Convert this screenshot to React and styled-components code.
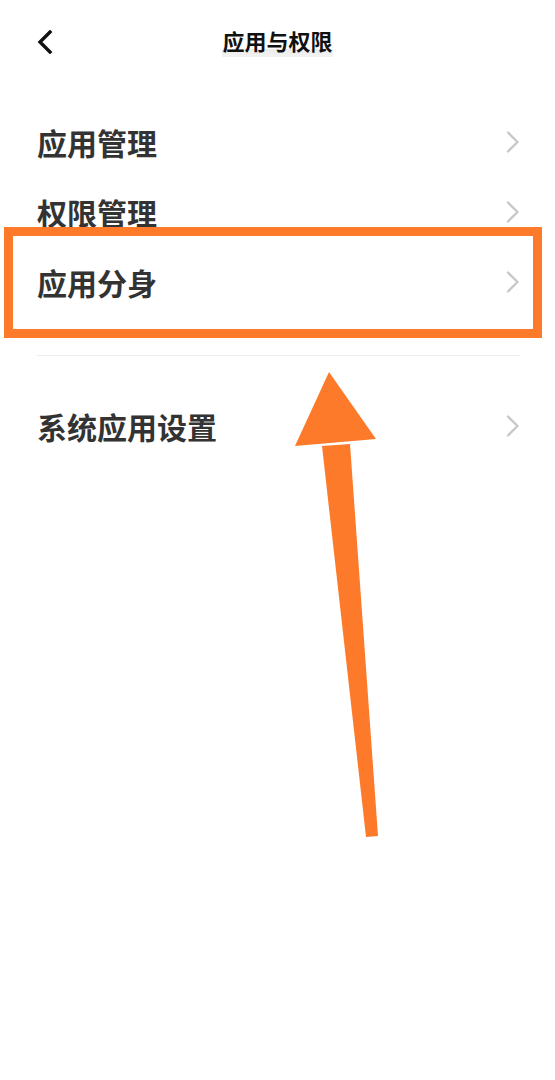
import React from "react";
import styled, { createGlobalStyle } from "styled-components";

const GlobalStyle = createGlobalStyle`
  html, body {
    margin: 0;
    padding: 0;
    background: #ffffff;
  }
  body {
    font-family: "Noto Sans CJK SC", "Noto Sans", sans-serif;
  }
`;

const items = [
  { id: "apps", label: "应用管理" },
  { id: "perms", label: "权限管理" },
  { id: "clone", label: "应用分身" },
];

function BackIcon() {
  return (
    <svg width="16" height="24" viewBox="0 0 16 24">
      <path d="M13 2 L3 12 L13 22" fill="none" stroke="#111" strokeWidth="3.4" strokeLinecap="square" />
    </svg>
  );
}

function Chevron() {
  return (
    <svg width="14" height="22" viewBox="0 0 14 22">
      <path d="M2 1.5 L11.5 11 L2 20.5" fill="none" stroke="#c8c8c8" strokeWidth="2.4" strokeLinecap="round" strokeLinejoin="round" />
    </svg>
  );
}

export default function App() {
  return (
    <>
      <GlobalStyle />
      <Page>
        <Header>
          <BackButton>
            <BackIcon />
          </BackButton>
          <Title>应用与权限</Title>
        </Header>

        <List>
          {items.map((item) => (
            <Row key={item.id}>
              <Label>{item.label}</Label>
              <Chevron />
            </Row>
          ))}
        </List>

        <Divider />

        <List $top={35}>
          <Row>
            <Label>系统应用设置</Label>
            <Chevron />
          </Row>
        </List>

        {/* 주석 표시: 강조 박스와 화살표 */}
        <HighlightBox />
        <ArrowLayer width="555" height="1080" viewBox="0 0 555 1080">
          <polygon points="329,372 295,446 376,439" fill="#fd7a2b" />
          <polygon points="322,446 350,444 378,836 366,837" fill="#fd7a2b" />
        </ArrowLayer>
      </Page>
    </>
  );
}

const Page = styled.div`
  position: relative;
  width: 555px;
  height: 1080px;
  overflow: hidden;
  background: #ffffff;
`;

const Header = styled.div`
  position: relative;
  height: 84px;
  display: flex;
  align-items: center;
  justify-content: center;
`;

const BackButton = styled.div`
  position: absolute;
  left: 37px;
  top: 30px;
  display: flex;
`;

const Title = styled.div`
  font-size: 22px;
  font-weight: 700;
  color: #111;
  line-height: 1;
  padding-bottom: 6px;
  margin-top: 2px;
  background: linear-gradient(to bottom, transparent 0, transparent 20px, #ececec 20px, #f2f2f2 28px);
`;

const List = styled.div`
  display: flex;
  flex-direction: column;
  margin-top: ${(p) => (p.$top != null ? p.$top : 23)}px;
`;

const Row = styled.div`
  height: 70px;
  display: flex;
  align-items: center;
  justify-content: space-between;
  padding: 0 35px 0 37px;
`;

const Label = styled.div`
  font-size: 30px;
  font-weight: 700;
  color: #333333;
  line-height: 1;
`;

const Divider = styled.div`
  height: 1px;
  background: #eeeeee;
  margin: 38px 35px 0 37px;
`;

const HighlightBox = styled.div`
  position: absolute;
  left: 4px;
  top: 227px;
  width: 538px;
  height: 111px;
  box-sizing: border-box;
  border: 9px solid #fd7a2b;
  pointer-events: none;
`;

const ArrowLayer = styled.svg`
  position: absolute;
  left: 0;
  top: 0;
  pointer-events: none;
`;
